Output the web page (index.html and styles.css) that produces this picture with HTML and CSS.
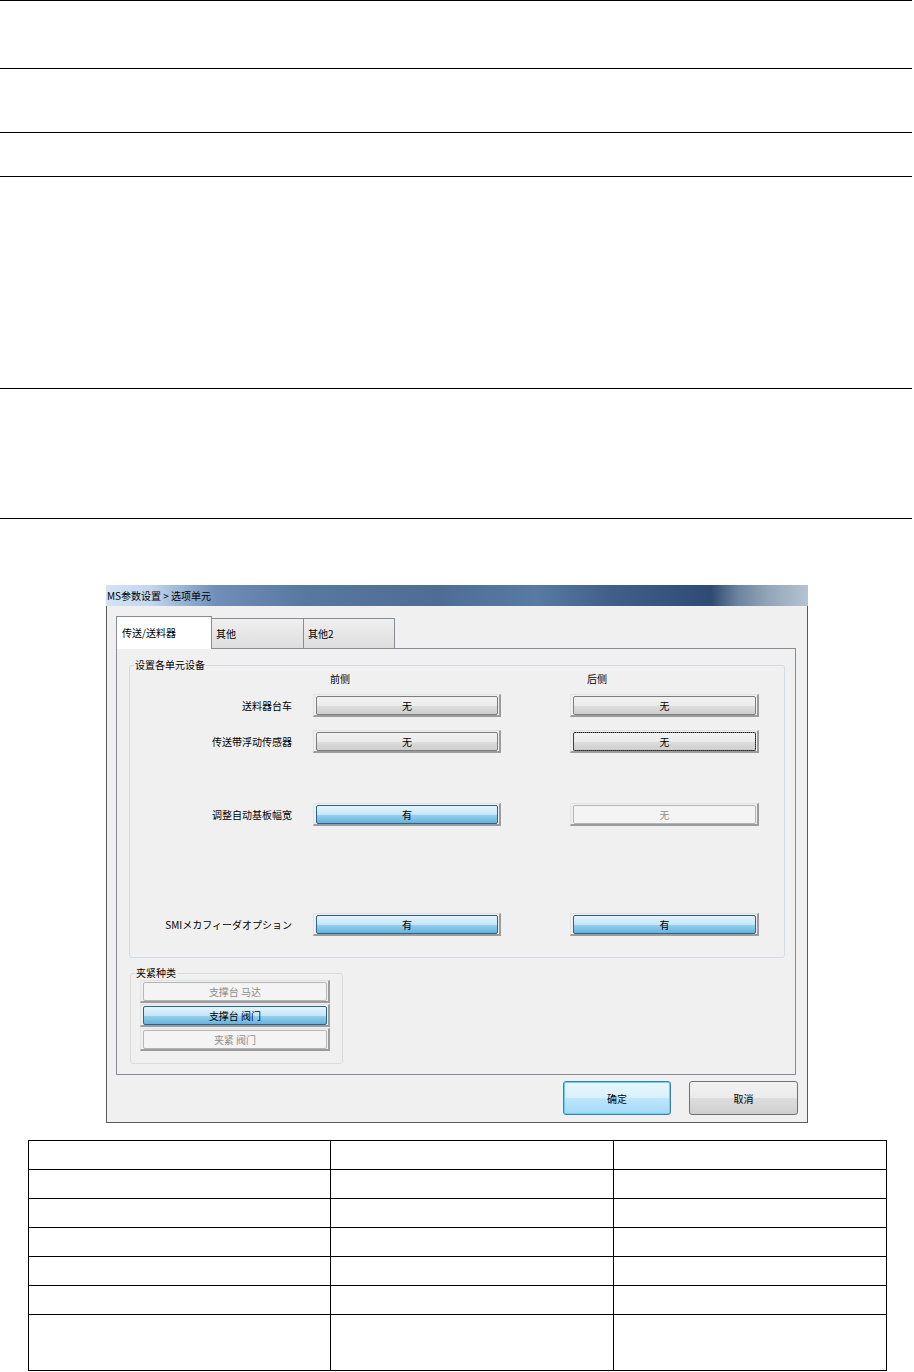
FILE: index.html
```html
<!DOCTYPE html>
<html lang="zh-CN">
<head>
<meta charset="utf-8">
<title>MS参数设置 &gt; 选项单元</title>
<link rel="stylesheet" href="styles.css">
</head>
<body>
<div class="page">
  <div class="rules">
    <div class="rule rule-a"></div>
    <div class="rule rule-b"></div>
    <div class="rule rule-c"></div>
    <div class="rule rule-d"></div>
    <div class="rule rule-e"></div>
  </div>

  <div class="dlg">
    <div class="titlebar">MS参数设置 &gt; 选项单元</div>
    <div class="dlg-body">
      <div class="tabs">
        <div class="tab tab-1 active">传送/送料器</div>
        <div class="tab tab-2">其他</div>
        <div class="tab tab-3">其他2</div>
      </div>
      <div class="panel">
        <fieldset class="grp units">
          <legend>设置各单元设备</legend>
          <div class="urow head">
            <span></span>
            <span class="colh">前侧</span>
            <span class="colh">后侧</span>
          </div>
          <div class="urow row-1">
            <span class="lbl">送料器台车</span>
            <div class="bf"><div class="btn">无</div></div>
            <div class="bf wide"><div class="btn">无</div></div>
          </div>
          <div class="urow row-2">
            <span class="lbl">传送带浮动传感器</span>
            <div class="bf"><div class="btn">无</div></div>
            <div class="bf wide"><div class="btn focus">无</div></div>
          </div>
          <div class="urow row-3">
            <span class="lbl">调整自动基板幅宽</span>
            <div class="bf"><div class="btn on">有</div></div>
            <div class="bf wide"><div class="btn off">无</div></div>
          </div>
          <div class="urow row-4">
            <span class="lbl">SMIメカフィーダオプション</span>
            <div class="bf"><div class="btn on">有</div></div>
            <div class="bf wide"><div class="btn on">有</div></div>
          </div>
        </fieldset>

        <fieldset class="grp clamp">
          <legend>夹紧种类</legend>
          <div class="clamp-list">
            <div class="bf cbf"><div class="btn off">支撑台 马达</div></div>
            <div class="bf cbf"><div class="btn on">支撑台 阀门</div></div>
            <div class="bf cbf"><div class="btn off">夹紧 阀门</div></div>
          </div>
        </fieldset>
      </div>
      <div class="actions">
        <div class="dbtn ok">确定</div>
        <div class="dbtn cancel">取消</div>
      </div>
    </div>
  </div>

  <table class="grid-table">
    <colgroup>
      <col class="c1">
      <col class="c2">
      <col class="c3">
    </colgroup>
    <tr><td></td><td></td><td></td></tr>
    <tr><td></td><td></td><td></td></tr>
    <tr><td></td><td></td><td></td></tr>
    <tr><td></td><td></td><td></td></tr>
    <tr><td></td><td></td><td></td></tr>
    <tr><td></td><td></td><td></td></tr>
    <tr class="tall"><td></td><td></td><td></td></tr>
  </table>
</div>
</body>
</html>
```

FILE: styles.css
```css
* { box-sizing: border-box; }

html, body {
  margin: 0;
  padding: 0;
  background: #fff;
}

body {
  font-family: "Noto Sans CJK SC", "Noto Sans CJK JP", "Noto Sans", "Liberation Sans", sans-serif;
  font-size: 10px;
  color: #000;
}

.page { width: 914px; }

/* top horizontal rules */
.rules { width: 912px; }
.rule { border-top: 1px solid #000; }
.rule-a { height: 68px; }
.rule-b { height: 64px; }
.rule-c { height: 44px; }
.rule-d { height: 212px; }
.rule-e { height: 131px; border-bottom: 1px solid #000; }

/* dialog */
.dlg {
  margin: 66px 0 0 106px;
  width: 702px;
  height: 538px;
  display: flex;
  flex-direction: column;
}

.titlebar {
  height: 21px;
  line-height: 21px;
  padding-left: 1px;
  white-space: nowrap;
  color: #000;
  background: linear-gradient(to right,
    #d4e3f4 0px,
    #c3d7ee 45px,
    #9ab5d6 75px,
    #6f8fb8 110px,
    #57789f 200px,
    #4d6d95 330px,
    #587ba3 430px,
    #41618a 500px,
    #32517a 580px,
    #2e4b73 605px,
    #6c849f 632px,
    #93a5b8 662px,
    #b5c3d0 702px);
}

.dlg-body {
  flex: 1;
  background: #f0f0f0;
  border: 1px solid #5b5b5b;
  border-top: none;
  padding: 10px 9px 7px 9px;
  display: flex;
  flex-direction: column;
}

/* tabs */
.tabs {
  display: flex;
  align-items: flex-end;
  height: 32px;
}

.tab {
  height: 30px;
  border: 1px solid #898c95;
  border-bottom: none;
  background: linear-gradient(#efefef, #dedede);
  padding: 0 4px;
  display: flex;
  align-items: center;
  margin-left: -1px;
  white-space: nowrap;
}

.tab-1 { width: 96px; margin-left: 0; }
.tab-2 { width: 93px; }
.tab-3 { width: 92px; }

.tab.active {
  height: 33px;
  margin-bottom: -1px;
  background: #fff;
  padding-left: 5px;
  padding-bottom: 2px;
  position: relative;
  z-index: 1;
}

.panel {
  width: 680px;
  height: 427px;
  border: 1px solid #898c95;
  background: #f0f0f0;
  padding: 9px 10px 0 12px;
}

/* group boxes */
.grp {
  margin: 0;
  padding: 0;
  min-width: 0;
  border: 1px solid #d3dbe1;
  border-radius: 3px;
}

.grp legend {
  padding: 0 1px;
  margin-left: 4px;
  line-height: 14px;
  font-size: 10px;
}

.units { padding-bottom: 21px; }

.urow {
  display: grid;
  grid-template-columns: 183px 257px 189px;
  align-items: center;
}

.urow.head { height: 14px; line-height: 14px; }
.colh { padding-left: 17px; }

.lbl {
  text-align: right;
  padding-right: 21px;
  white-space: nowrap;
}

.row-1 { margin-top: 8px; }
.row-2 { margin-top: 13px; }
.row-3 { margin-top: 50px; }
.row-4 { margin-top: 87px; }

/* button with sunken frame */
.bf {
  width: 188px;
  height: 23px;
  border-style: solid;
  border-width: 1px 2px 2px 1px;
  border-color: #e2e2e2 #9c9c9c #9c9c9c #e2e2e2;
  padding: 1px 1px 0 2px;
}

.bf.wide { width: 189px; }
.bf.cbf { width: 190px; }

.btn {
  height: 100%;
  border: 1px solid #7c7c7c;
  border-radius: 2px;
  display: flex;
  align-items: center;
  justify-content: center;
  white-space: nowrap;
  background: linear-gradient(#f2f2f2 0%, #ebebeb 50%, #dddddd 50%, #cfcfcf 100%);
}

.btn.focus {
  outline: 1px dotted #000;
  outline-offset: -1px;
}

.btn.on {
  border-color: #2c628b;
  background: linear-gradient(#e5f4fc 0%, #c4e5f6 50%, #98d1ef 50%, #68b3db 100%);
}

.btn.off {
  border-color: #b2b6b9;
  background: #f4f4f4;
  color: #8d8d8d;
}

/* clamp group */
.clamp {
  width: 213px;
  margin: 8px 0 0 1px;
  border-color: #dadada;
}

.clamp-list {
  display: flex;
  flex-direction: column;
  gap: 1px;
  padding: 0 0 12px 9px;
}

/* dialog buttons */
.actions {
  display: flex;
  justify-content: flex-end;
  gap: 18px;
  margin-top: 6px;
}

.dbtn {
  height: 34px;
  border-radius: 3px;
  display: flex;
  align-items: center;
  justify-content: center;
}

.dbtn.ok {
  width: 108px;
  border: 1px solid #3c7fb1;
  box-shadow: inset 0 0 0 1px #62d3fb;
  background: linear-gradient(#eaf6fd 0%, #d9f0fc 50%, #bee6fd 50%, #a7d9f5 100%);
}

.dbtn.cancel {
  width: 109px;
  border: 1px solid #707070;
  background: linear-gradient(#f2f2f2 0%, #ebebeb 50%, #dddddd 50%, #cfcfcf 100%);
}

/* bottom table */
.grid-table {
  margin: 17px 0 0 28px;
  width: 858px;
  border-collapse: collapse;
  table-layout: fixed;
}

.grid-table .c1 { width: 302px; }
.grid-table .c2 { width: 283px; }
.grid-table .c3 { width: 273px; }

.grid-table td {
  border: 1px solid #000;
  height: 29px;
  padding: 0;
}

.grid-table tr.tall td { height: 56px; }
```
